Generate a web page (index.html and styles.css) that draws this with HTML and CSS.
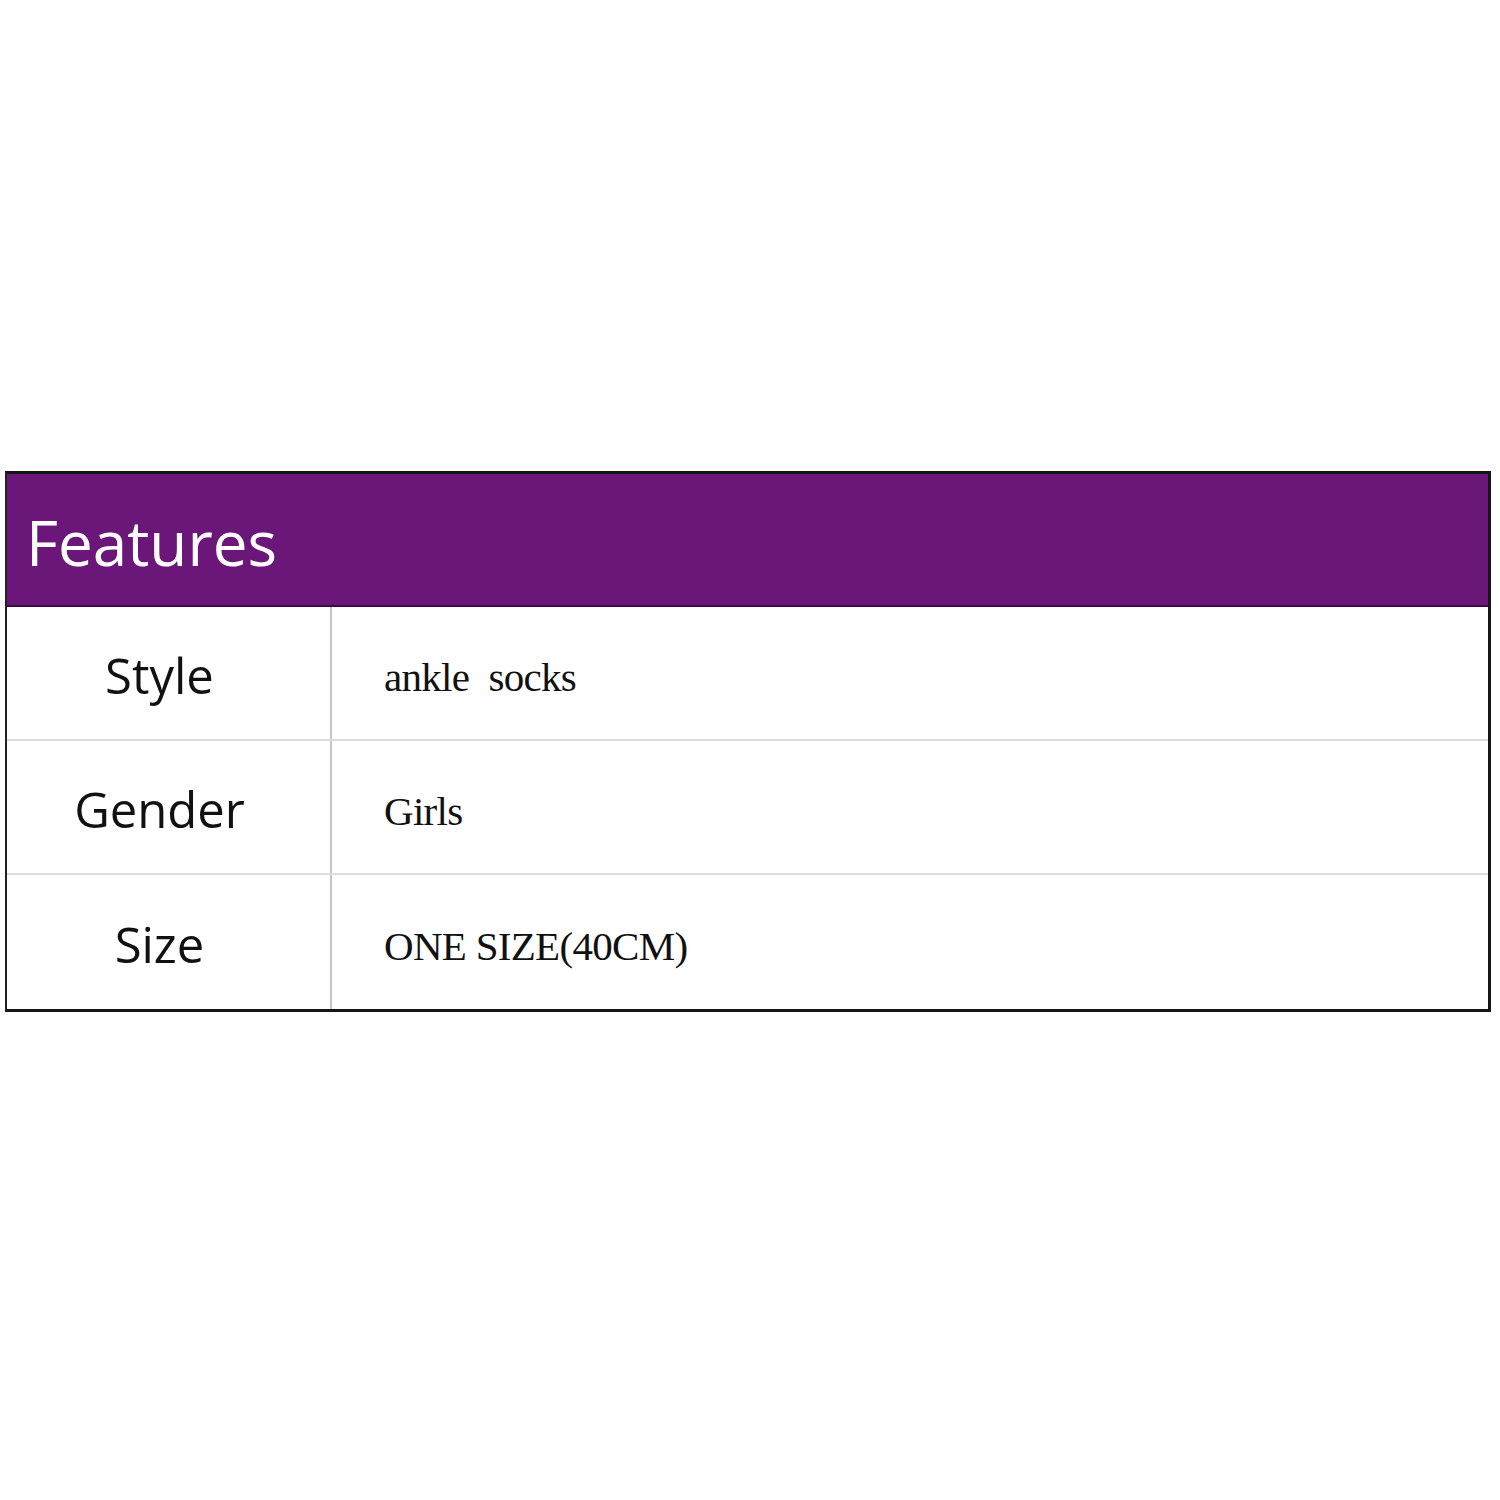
FILE: index.html
```html
<!DOCTYPE html>
<html>
<head>
<meta charset="utf-8">
<link rel="stylesheet" href="styles.css">
</head>
<body>
<div class="page">
  <div class="table">
    <div class="header">Features</div>
    <div class="row">
      <div class="label">Style</div>
      <div class="value">ankle&nbsp; socks</div>
    </div>
    <div class="row">
      <div class="label">Gender</div>
      <div class="value">Girls</div>
    </div>
    <div class="row last">
      <div class="label">Size</div>
      <div class="value">ONE SIZE(40CM)</div>
    </div>
  </div>
</div>
</body>
</html>
```
FILE: styles.css
```css
html, body {
  margin: 0;
  padding: 0;
  background: #ffffff;
}
.page {
  padding: 471px 0 0 5px;
  width: 1486px;
}
.table {
  border-top: 3px solid #151515;
  border-left: 2px solid #222;
  border-right: 3px solid #151515;
  border-bottom: 3px solid #151515;
}
.header {
  background: #6b1679;
  border-bottom: 2px solid #3b0b44;
  color: #ffffff;
  font-family: "Open Sans", sans-serif;
  font-size: 62px;
  display: flex;
  align-items: center;
  padding-left: 19px;
  padding-top: 4px;
  box-sizing: border-box;
  height: 133px;
}
.row {
  display: grid;
  grid-template-columns: 325px 1fr;
  height: 132px;
  border-bottom: 2px solid #dcdcdc;
}
.row.last {
  border-bottom: none;
  height: 134px;
}
.label {
  border-right: 2px solid #c4c4c4;
  display: flex;
  align-items: center;
  justify-content: center;
  padding-right: 18px;
  padding-top: 4px;
  font-family: "Open Sans", sans-serif;
  font-size: 49px;
  color: #111;
}
.value {
  display: flex;
  align-items: center;
  padding-left: 52px;
  padding-top: 8px;
  font-family: "Liberation Serif", serif;
  font-size: 41px;
  letter-spacing: -0.7px;
  color: #111;
}
```
